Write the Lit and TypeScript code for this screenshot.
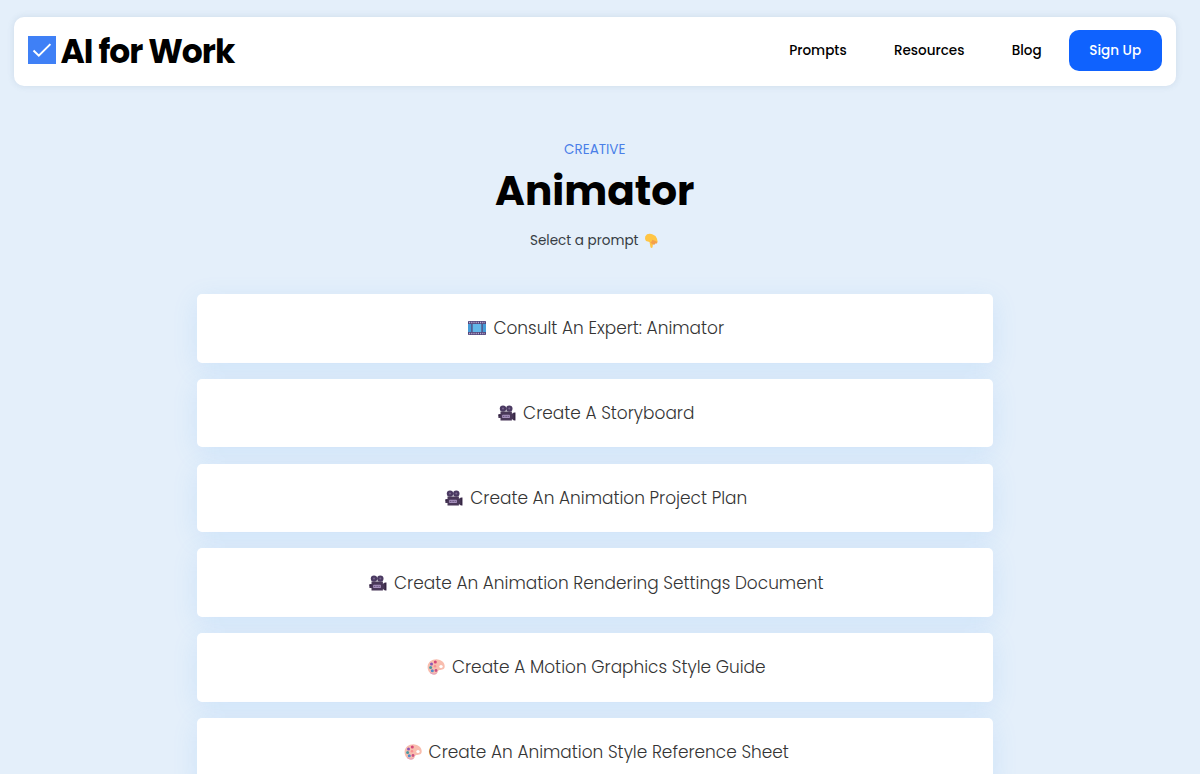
import { LitElement, html, css, svg } from "lit";
import { customElement } from "lit/decorators.js";

type IconName = "film" | "camera" | "palette";

const icons = {
  film: svg`<rect y="2" width="18" height="14" rx=".7" fill="#51467b"/>
    <path d="M1 3.5h16M1 14.5h16" stroke="#b9a9cf" stroke-width="1.3" stroke-dasharray="1.2 1"/>
    <rect x="0" y="5" width="3.3" height="8" fill="#459bd7"/><rect x="4.6" y="5" width="8.8" height="8" fill="#62b6e8"/><rect x="14.7" y="5" width="3.3" height="8" fill="#459bd7"/>`,
  camera: svg`<circle cx="5" cy="4.6" r="3.2" fill="#4b3a62"/><circle cx="11.3" cy="4.6" r="3.2" fill="#4b3a62"/>
    <circle cx="5" cy="4.6" r="1" fill="#79668e"/><circle cx="11.3" cy="4.6" r="1" fill="#79668e"/>
    <path d="M2.5 7.5h11.4v2.2l2-1.2h1.6v8h-1.6l-2-1.6v1.7H2.5v-2.7H.4V10h2.1z" fill="#493758"/>
    <path d="M.5 11.7h2M16.3 9v7" stroke="#342541" stroke-width="1.2"/>
    <rect x="4.2" y="10.7" width="7.7" height="3.4" rx=".6" fill="#a58ebb"/><path d="M5 12.4h6" stroke="#65527b" stroke-dasharray="1 .6"/>`,
  palette: svg`<path d="M10.5 1.4C5 1 .8 4.2.6 8.8.4 13.4 3.8 17 8 16.6c3-.3 2-3.2 3.8-4.3 1.7-1 5.6.1 5.9-3.6.3-4-3-7-7.2-7.3z" fill="#f8bdae"/>
    <path d="M3 14.5c1.8 1.6 5.5 2.2 6.7.2" stroke="#dc9bc0" fill="none"/>
    <ellipse cx="14" cy="8.4" rx="1.7" ry="1.5" fill="#fff"/><circle cx="8.3" cy="4" r="1.5" fill="#d44678"/>
    <circle cx="4.5" cy="6" r="1.5" fill="#8c55b5"/><circle cx="3.6" cy="9.6" r="1.5" fill="#4a9aa3"/>
    <circle cx="8" cy="8.2" r="1.2" fill="#fa8f91"/><circle cx="5.3" cy="12.7" r="1.5" fill="#508dcb"/><circle cx="9" cy="12.5" r="1.4" fill="#c94f83"/>`,
};

const prompts: { icon: IconName; label: string }[] = [
  { icon: "film", label: "Consult An Expert: Animator" },
  { icon: "camera", label: "Create A Storyboard" },
  { icon: "camera", label: "Create An Animation Project Plan" },
  { icon: "camera", label: "Create An Animation Rendering Settings Document" },
  { icon: "palette", label: "Create A Motion Graphics Style Guide" },
  { icon: "palette", label: "Create An Animation Style Reference Sheet" },
];

@customElement("app-root")
export class AppRoot extends LitElement {
  static styles = css`
    :host {
      display: block; box-sizing: border-box; height: 774px; overflow: hidden;
      padding: 17px 24.5px 0 14px; background: #e4effa; color: #000;
      font-family: Poppins, Inter, "Open Sans", sans-serif; white-space: nowrap;
    }
    svg { display: block; flex: none; }
    header {
      display: flex; align-items: center; justify-content: space-between; box-sizing: border-box;
      height: 68.5px; padding: 0 14px; background: #fff; border-radius: 10px;
      box-shadow: 0 0 7px rgba(70, 105, 145, .14);
    }
    .brand { display: flex; align-items: center; gap: 4.5px; height: 66px; align-self: flex-start; }
    .name { font-size: 32.9px; line-height: 40px; font-weight: 700; letter-spacing: -1px; padding-top: 3px; }
    nav {
      display: flex; align-items: center; gap: 47.3px; height: 67.4px; align-self: flex-start;
      font-size: 13.55px; line-height: 20px; font-weight: 500;
    }
    nav .signup {
      display: flex; justify-content: center; align-items: center; box-sizing: border-box; width: 92.5px; height: 41px;
      margin-left: -20px; border-radius: 10px; background: #0f62fe; color: #fff;
    }
    main { display: flex; flex-direction: column; align-items: center; padding-top: 54px; }
    .category { color: #4a7fe8; font-size: 13.5px; line-height: 20px; }
    .title { font-size: 40.6px; line-height: 50px; font-weight: 700; margin-top: 6px; }
    .hint { display: flex; align-items: center; gap: 5px; margin-top: 15.5px; font-size: 13.55px; line-height: 20px; color: #363c43; }
    .list { display: flex; flex-direction: column; gap: 16.3px; width: 796px; margin-top: 43px; }
    .card {
      display: flex; align-items: center; justify-content: center; gap: 7px; height: 68.5px;
      border-radius: 5px; background: #fff; color: #343434; font-size: 16.96px; line-height: 26px; font-weight: 300;
      box-shadow: 0 6px 26px rgba(80, 160, 250, .14);
    }
    .card svg { margin-left: 3px; }
  `;

  render() {
    return html`
      <header>
        <div class="brand">
          <svg width="28" height="28" viewBox="0 0 28 28">
            <rect width="28" height="28" fill="#3f80f6"/>
            <path d="M5.5 14.5l5.3 5.2L22.4 8.1" fill="none" stroke="#fff" stroke-width="2"/>
          </svg>
          <span class="name">AI for Work</span>
        </div>
        <nav>
          <span>Prompts</span>
          <span>Resources</span>
          <span>Blog</span>
          <span class="signup">Sign Up</span>
        </nav>
      </header>
      <main>
        <div class="category">CREATIVE</div>
        <div class="title">Animator</div>
        <div class="hint">
          <span>Select a prompt</span>
          <svg width="16" height="16" viewBox="0 0 16 16">
            <path d="M3 1.3Q6 .2 8.8 1.5q3.3 1 4.2 4.2l.6 3q-.3 1.5-1.7 1L9 9.4l-.4 4.8q-1.1 1.6-2.1 0L5.5 9 2 8Q.5 6 1.2 3.6z" fill="#ffc544"/>
            <path d="M6.2 9.2Q8 9 8.4 6.7l2.3 1.1 2.6 1-.3 1.6-1.6.1-1 1.3-1.8-.2" fill="#f4a04b"/>
          </svg>
        </div>
        <div class="list">
          ${prompts.map((p) => html`
            <div class="card">
              <svg width="18" height="18" viewBox="0 0 18 18">${icons[p.icon]}</svg>
              <span>${p.label}</span>
            </div>`)}
        </div>
      </main>`;
  }
}
